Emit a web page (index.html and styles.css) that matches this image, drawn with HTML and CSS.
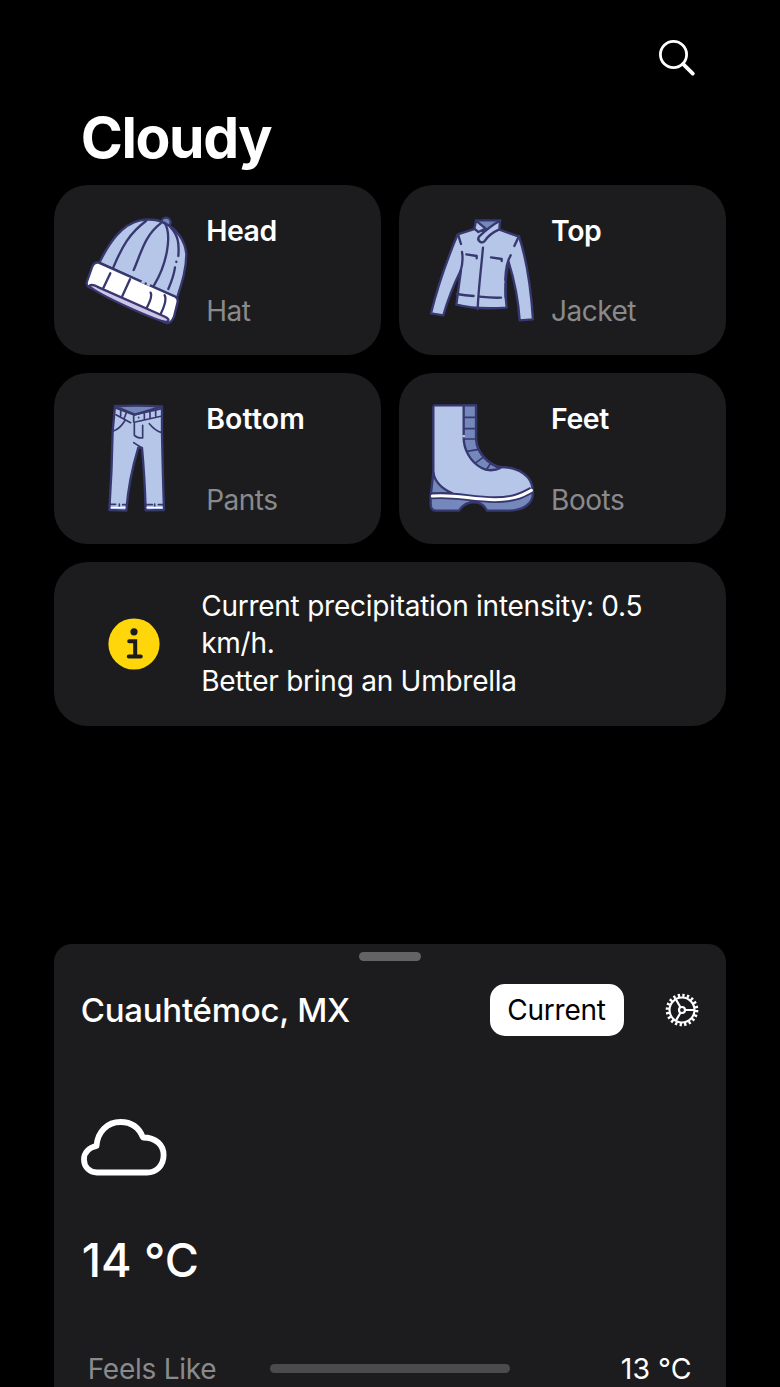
FILE: index.html
```html
<!DOCTYPE html>
<html lang="en">
<head>
  <meta charset="UTF-8" />
  <meta name="viewport" content="width=device-width, initial-scale=1" />
  <title>Cloudy</title>
  <link rel="stylesheet" href="styles.css">
</head>
<body>
  <div class="screen">
    <header class="topbar">
      <svg class="search-icon" viewBox="0 0 38 38">
        <circle cx="15.5" cy="15.5" r="13.1" />
        <path d="M25.2 25.2 L34.8 34.6" />
      </svg>
    </header>

    <h1>Cloudy</h1>

    <main class="cards">
      <section class="card">
        <svg class="art" viewBox="90 96 336 348">
          <circle class="blue-dark" cx="348" cy="127" r="14" />
          <path class="blue" d="M148 248 C178 188 215 133 270 121 C300 116 322 118 340 128 C380 145 405 180 409 222 C409 270 395 310 381 354 Z" />
          <path class="white" d="M146 248 L376 350 Q386 356 382 370 L372 410 Q362 434 346 428 L120 323 Q106 316 111 304 L126 262 Q132 245 146 248 Z" />
          <path class="lilac" d="M118 318 C122 311 132 315 146 322 L340 408 C356 415 360 420 350 426 C320 423 145 345 118 318 Z" />
          <path class="line" d="M288 123 C238 160 216 200 190 262 M332 130 C284 166 274 218 251 270 M344 128 C366 165 352 250 312 316 M362 142 C384 165 388 190 385 228 M375 262 C371 290 363 308 355 327 M379 245 V246 M181 280 L160 324 M240 298 L217 348 M302 338 Q308 350 290 384 M344 346 Q352 360 333 400" />
          <path class="gap" d="M275 304 L300 315" />
          <path class="line" d="M287 310 V311" />
        </svg>
        <div class="card-text">
          <h2>Head</h2>
          <p>Hat</p>
        </div>
      </section>

      <section class="card">
        <svg class="art" viewBox="90 96 336 348">
          <path class="blue" d="M242 146 L188 163 C160 230 130 310 108 400 L145 406 C158 360 176 314 198 270 L184 374 C230 386 290 386 335 383 L332 350 C330 310 332 280 341 246 C358 300 370 360 374 421 L414 418 C408 330 396 240 372 170 L314 149 Z" />
          <path class="blue-dark" d="M243 121 H316 L268 160 Z" />
          <path class="blue" d="M243 122 L272 146 L250 156 L238 146 Z" />
          <path class="blue" d="M315 122 Q285 138 252 170 C244 182 262 194 270 182 Q282 162 313 148 Z" />
          <path class="line" d="M190 166 L198 192 M372 168 L358 198 M201 216 Q206 245 196 276 M347 226 Q332 250 331 300 M214 223 L245 228 V235 M288 232 L320 237 V243 M264 203 C258 270 250 330 248 388 M186 342 Q210 347 236 348 M254 350 Q290 354 318 353 M332 312 V352" />
        </svg>
        <div class="card-text">
          <h2>Top</h2>
          <p>Jacket</p>
        </div>
      </section>

      <section class="card">
        <svg class="art" viewBox="90 92 336 348">
          <path class="blue" d="M195 110 L188 185 Q186 300 178 422 L229 424 Q236 330 265 235 L276 236 Q284 320 287 423 L342 422 Q338 300 336 190 V112 Z" />
          <path class="blue-dark" d="M195 111 Q265 106 336 112 L254 136 Z" />
          <path class="line thin" d="M196 116 L251 136 V158 M198 136 L242 160 M254 136 L336 118 M256 158 L336 140 M212 124 V140 M229 130 L223 146 M283 130 V149 M300 128 V146 M317 123 V141 M266 144 V145 M253 160 V198 Q262 207 278 206 V168 M224 155 Q210 178 189 186 M298 163 Q315 184 336 190 M251 220 L276 236" />
          <path class="line thin" d="M181 405 H197 M208 404 V410 M218 406 H228 M288 406 H307 M314 404 V410 M325 406 H338" />
          <path class="white-line" d="M184 415 H225 M291 415 H336" />
        </svg>
        <div class="card-text">
          <h2 class="wide">Bottom</h2>
          <p>Pants</p>
        </div>
      </section>

      <section class="card">
        <svg class="art" viewBox="90 92 336 348">
          <path class="blue" d="M118 108 H243 V210 C246 255 285 287 316 293 C370 293 412 320 413 362 C405 390 350 398 270 394 C220 390 160 376 108 378 Q118 345 115 320 V112 Z" />
          <path class="blue-dark" d="M206 108 H243 V210 C246 255 285 287 316 296 C300 305 274 305 260 296 C226 278 206 240 206 205 Z" />
          <path class="blue-dark" d="M115 310 Q122 350 172 372 H108 Z" />
          <path class="blue-dark" d="M107 376 C180 372 230 394 300 394 C350 394 375 380 413 362 C420 405 380 424 340 424 H276 Q266 402 240 398 Q208 398 192 424 H122 Q106 424 107 400 Z" />
          <path class="band-edge" d="M110 380 C180 374 230 391 300 391 C350 391 375 382 410 362" />
          <path class="band" d="M112 380 C180 374 230 391 300 391 C350 391 375 382 409 363" />
          <path class="line thin" d="M206 144 H242 M206 178 H242 M208 209 H243 M216 246 L247 241 M240 282 L264 264 M274 301 L285 285" />
          <path class="gap" d="M206 197 V204" />
        </svg>
        <div class="card-text">
          <h2>Feet</h2>
          <p>Boots</p>
        </div>
      </section>

      <section class="card notice">
        <svg class="info-icon" viewBox="0 0 52 52">
          <circle cx="26" cy="26" r="25.6" fill="#ffd60a" />
          <circle cx="26" cy="13.8" r="3.6" fill="#1c1c1e" />
          <path d="M21.2 23.2 H27.2 V38.2 M20.8 38.6 H32.8" />
        </svg>
        <p>Current precipitation intensity: 0.5 km/h.<br />Better bring an Umbrella</p>
      </section>
    </main>

    <section class="sheet">
      <div class="grabber"></div>
      <div class="sheet-head">
        <h3>Cuauhtémoc, MX</h3>
        <button type="button" class="current-btn">Current</button>
        <svg class="gear-icon" viewBox="-51 -51 102 102">
          <circle class="teeth" r="44" pathLength="200" />
          <circle r="37.5" />
          <circle r="9" />
          <path d="M10 0 H38 M-5 -9 L-19 -33 M-5 9 L-19 33" />
        </svg>
      </div>
      <svg class="cloud-icon" viewBox="0 0 86 57">
        <path d="M16 53.5 H66 C75.5 53.5 82.6 46.5 82.6 36 C82.6 26 75 18.5 62 18.5 C58 8.5 50 3 39.5 3 C26.5 3 16.5 12.5 15.5 27 C8 28.5 3 33.5 3 40.5 C3 48 8.5 53.5 16 53.5 Z" />
      </svg>
      <div class="temperature">14 °C</div>
      <div class="detail">
        <span class="label">Feels Like</span>
        <span class="value">13 °C</span>
      </div>
    </section>
    <div class="home-indicator"></div>
  </div>
</body>
</html>
```
FILE: styles.css
```css
* {
  box-sizing: border-box;
}
body {
  margin: 0;
  background-color: #000;
  color: #fff;
  font-family: Inter, "Liberation Sans", sans-serif;
  font-size: 28px;
  letter-spacing: -0.25px;
}
h1, h2, h3, p {
  margin: 0;
}
svg {
  display: block;
  flex: none;
}
.screen {
  position: relative;
  height: 1387px;
  padding: 0 54.5px 0 53.7px;
  overflow: hidden;
  display: flex;
  flex-direction: column;
}
.topbar {
  display: flex;
  justify-content: flex-end;
  padding: 39px 30px 0 0;
}
.search-icon {
  width: 38px;
  height: 38px;
  fill: none;
  stroke: #fff;
  stroke-width: 2.8;
  stroke-linecap: round;
}
.search-icon path {
  stroke-width: 3.8;
}
h1 {
  margin: 27px 0 0 27px;
  height: 80.6px;
  line-height: 68px;
  font-size: 57px;
  font-weight: 700;
  letter-spacing: -1.4px;
}

/* clothing cards */
.cards {
  display: grid;
  grid-template-columns: 1fr 1fr;
  grid-auto-rows: 170.5px;
  gap: 18px;
}
.card {
  display: flex;
  padding: 27px 26px;
  gap: 14.5px;
  background-color: #1c1c1e;
  border-radius: 34px;
}
.art {
  width: 112px;
  height: 116px;
  stroke: #37386f;
  stroke-width: 7;
  stroke-linejoin: round;
  stroke-linecap: round;
}
.blue {
  fill: #b6c6e8;
}
.blue-dark {
  fill: #7488bb;
}
.white {
  fill: #fff;
}
.lilac {
  fill: #cfc5e8;
}
.line {
  fill: none;
}
.thin {
  stroke-width: 5;
}
.gap {
  stroke: #b6c6e8;
  stroke-width: 8;
  stroke-linecap: butt;
}
.white-line {
  stroke: #fff;
  stroke-width: 4;
}
.band,
.band-edge {
  fill: none;
  stroke: #fff;
  stroke-width: 9;
}
.band-edge {
  stroke: #37386f;
  stroke-width: 20;
  stroke-linecap: butt;
}
.card-text {
  display: flex;
  flex-direction: column;
  justify-content: space-between;
  padding: 2px 0 0;
}
.card h2 {
  font-size: 28.4px;
  line-height: 34px;
  font-weight: 600;
  letter-spacing: -0.4px;
}
.card h2.wide {
  letter-spacing: 0.2px;
}
.card-text p {
  line-height: 34px;
  letter-spacing: -0.5px;
  color: #8a8a8c;
}
.notice {
  grid-column: 1 / -1;
  align-items: center;
  height: 164px;
  padding: 1px 54px 0;
  gap: 41.5px;
}
.notice p {
  line-height: 37.6px;
}
.info-icon {
  width: 52px;
  height: 52px;
  fill: none;
  stroke: #1c1c1e;
  stroke-width: 4;
  stroke-linecap: round;
}
.info-icon circle {
  stroke: none;
}

/* bottom sheet */
.sheet {
  position: absolute;
  left: 53.7px;
  right: 54.5px;
  top: 944px;
  height: 460px;
  padding: 8px 27px 0;
  background-color: #1c1c1e;
  border-radius: 18px 18px 0 0;
}
.grabber {
  width: 62px;
  height: 9px;
  margin: 0 auto;
  border-radius: 5px;
  background-color: #636365;
}
.sheet-head {
  display: flex;
  align-items: center;
  height: 52px;
  margin-top: 23px;
}
.sheet h3 {
  flex: 1;
  font-size: 33px;
  font-weight: 500;
}
.current-btn {
  width: 134px;
  height: 52px;
  padding: 0;
  border: none;
  border-radius: 15px;
  background-color: #fff;
  color: #000;
  font: inherit;
  letter-spacing: -0.2px;
}
.gear-icon {
  width: 34px;
  height: 34px;
  margin-left: 41px;
  fill: none;
  stroke: #fff;
  stroke-width: 6.5;
}
.gear-icon .teeth {
  stroke-width: 10;
  stroke-dasharray: 5 5;
}
.cloud-icon {
  width: 86px;
  height: 57px;
  margin-top: 82.5px;
  fill: none;
  stroke: #fff;
  stroke-width: 5.8;
  stroke-linejoin: round;
}
.temperature {
  margin: 56.5px 0 0 1px;
  line-height: 56px;
  font-size: 46.6px;
  font-weight: 500;
  letter-spacing: 0;
}
.detail {
  display: flex;
  justify-content: space-between;
  margin-top: 62.5px;
  padding: 0 7px;
  line-height: 36px;
}
.label {
  color: #8a8a8c;
}
.value {
  font-size: 28.5px;
  letter-spacing: 0;
}
.home-indicator {
  position: absolute;
  left: 270px;
  top: 1364px;
  width: 240px;
  height: 9px;
  border-radius: 5px;
  background-color: #4b4b4c;
}
```
